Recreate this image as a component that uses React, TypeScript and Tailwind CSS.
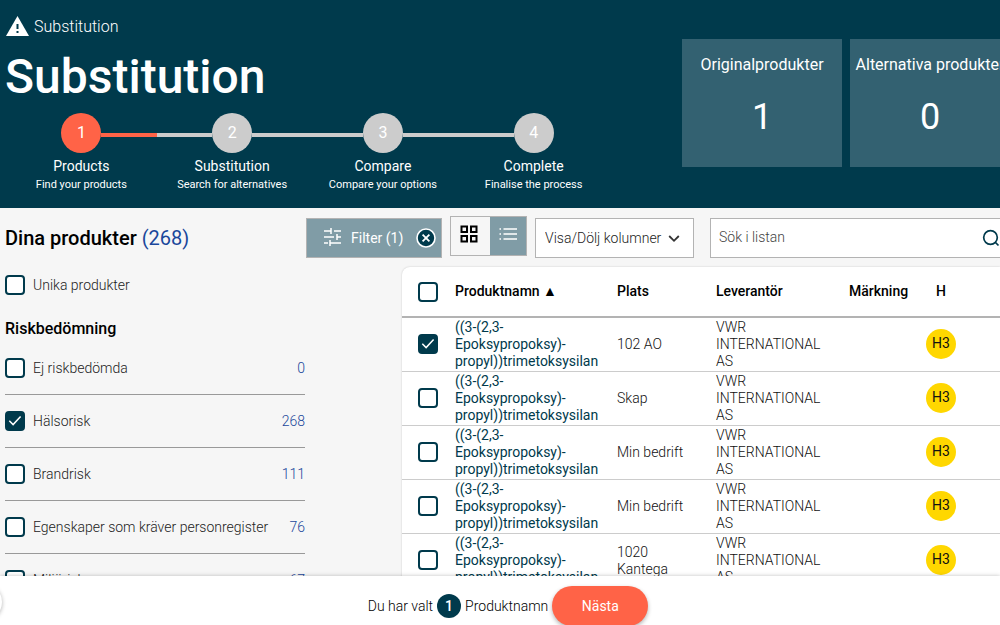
import { useState } from "react";

type CheckProps = { id: string; label?: string; checked: boolean; onChange: () => void };

function CheckBox({ id, label, checked, onChange }: CheckProps) {
  return (
    <span className="grid size-5 shrink-0">
      <input
        id={id}
        type="checkbox"
        aria-label={label}
        checked={checked}
        onChange={onChange}
        className="peer col-start-1 row-start-1 size-5 appearance-none rounded border-2 border-[#003a4c] bg-white checked:bg-[#003a4c]"
      />
      <svg
        viewBox="0 0 20 20"
        fill="none"
        stroke="white"
        strokeWidth="1.5"
        className="pointer-events-none invisible col-start-1 row-start-1 size-5 peer-checked:visible"
      >
        <path d="M4.3 9.8 L8.1 13.6 L15.6 5.6" />
      </svg>
    </span>
  );
}

const steps = [
  { title: "Products", hint: "Find your products" },
  { title: "Substitution", hint: "Search for alternatives" },
  { title: "Compare", hint: "Compare your options" },
  { title: "Complete", hint: "Finalise the process" },
];

function Step({ index, title, hint }: { index: number; title: string; hint: string }) {
  const left = index === 0 ? "" : "bg-[#cccccc]";
  const right = index === 0 ? "bg-[#ff6347]" : index === steps.length - 1 ? "" : "bg-[#cccccc]";
  return (
    <li className="flex flex-1 flex-col items-center">
      <div className="flex w-full items-center">
        <span className={`mt-1 h-1 flex-1 ${left}`} />
        <span
          className={`flex size-10 items-center justify-center rounded-full text-base ${
            index === 0 ? "bg-[#ff6347]" : "bg-[#cccccc]"
          }`}
        >
          {index + 1}
        </span>
        <span className={`mt-1 h-1 flex-1 ${right}`} />
      </div>
      <span className="mt-1 text-sm leading-[18px]">{title}</span>
      <span className="text-[11px] leading-5">{hint}</span>
    </li>
  );
}

function Stat({ label, value }: { label: string; value: number }) {
  return (
    <div className="flex h-32 w-40 flex-col items-center bg-[#336171] pt-[13px]">
      <span className="text-base leading-[26px] whitespace-nowrap">{label}</span>
      <span className="mt-4 text-4xl leading-[46px]">{value}</span>
    </div>
  );
}

const risks = [
  { name: "Ej riskbedömda", count: 0 },
  { name: "Hälsorisk", count: 268 },
  { name: "Brandrisk", count: 111 },
  { name: "Egenskaper som kräver personregister", count: 76 },
  { name: "Miljörisk", count: 67 },
];

const places = ["102 AO", "Skap", "Min bedrift", "Min bedrift", "1020 Kantega"];

function toggle<T>(list: T[], item: T) {
  return list.includes(item) ? list.filter((x) => x !== item) : [...list, item];
}

export default function App() {
  const [unique, setUnique] = useState(false);
  const [activeRisks, setActiveRisks] = useState(["Hälsorisk"]);
  const [selected, setSelected] = useState([0]);
  const [query, setQuery] = useState("");
  const all = selected.length === places.length;

  return (
    <div className="relative flex h-screen flex-col overflow-hidden bg-[#f6f6f6] font-['Roboto',sans-serif] text-black">
      <header className="flex shrink-0 bg-[#003a4c] pb-[13px] text-white">
        <div className="min-w-0 flex-1 pt-4 pl-[5px]">
          <div className="flex h-[22px] items-center gap-[5px]">
            <svg viewBox="0 0 24 20" className="mb-0.5 h-5 w-6 shrink-0">
              <path fill="white" d="M12.5 0 L24 20 H1 Z" />
              <path fill="#003a4c" d="M11.5 8 h2 v5 h-2 Z M11.5 15 h2 v2 h-2 Z" />
            </svg>
            <span className="text-base font-light">Substitution</span>
          </div>
          <h1 className="mt-[11px] text-5xl leading-14 font-medium">Substitution</h1>
          <ol className="mt-2 flex max-w-[604px] pl-px">
            {steps.map((s, i) => (
              <Step key={s.title} index={i} title={s.title} hint={s.hint} />
            ))}
          </ol>
        </div>
        <div className="-mr-2.5 flex shrink-0 gap-2 pt-[39px]">
          <Stat label="Originalprodukter" value={1} />
          <Stat label="Alternativa produkter" value={0} />
        </div>
      </header>

      <main className="flex min-h-0 flex-1 overflow-hidden pl-[5px]">
        <aside className="w-[300px] shrink-0 pt-4 text-sm font-light text-[#222222]">
          <h2 className="text-xl leading-7 font-medium text-black">
            Dina produkter <span className="font-normal text-[#1a479b]">(268)</span>
          </h2>
          <div className="mt-[23px] flex items-center gap-2">
            <CheckBox id="unique" checked={unique} onChange={() => setUnique(!unique)} />
            <label htmlFor="unique">Unika produkter</label>
          </div>
          <h3 className="mt-[22px] text-base leading-6 font-medium text-black">Riskbedömning</h3>
          <ul>
            {risks.map((r, i) => (
              <li key={r.name} className="flex h-[53px] items-center gap-2 border-b border-[#999999] first:mt-px">
                <CheckBox
                  id={`risk-${i}`}
                  checked={activeRisks.includes(r.name)}
                  onChange={() => setActiveRisks(toggle(activeRisks, r.name))}
                />
                <label htmlFor={`risk-${i}`}>{r.name}</label>
                <span className="ml-auto text-[#1a479b]">{r.count}</span>
              </li>
            ))}
          </ul>
        </aside>

        <section className="min-w-0 flex-1 pl-px">
          <div className="flex items-start pt-2">
            <button
              type="button"
              className="mt-0.5 flex h-10 w-34 items-center border border-[#b3b3b3] bg-[#809ca6] pl-4 text-sm text-white"
            >
              <svg viewBox="0 0 20 20" stroke="white" strokeWidth="1.5" fill="none" className="mr-2 mb-0.5 size-5">
                <path d="M1 4 H8 M8 1 V7 M11 4 H18 M1 10 H11 M14 7 V13 M14 10 H18 M1 16 H5 M7 13 V19 M7 16 H18" />
              </svg>
              <span>Filter (1)</span>
              <svg viewBox="0 0 20 20" className="ml-[13px] size-5">
                <circle cx="10" cy="10" r="9" fill="#003a4c" stroke="white" strokeWidth="1.6" />
                <path d="M6.6 6.6 L13.4 13.4 M13.4 6.6 L6.6 13.4" stroke="white" strokeWidth="1.8" />
              </svg>
            </button>
            <div className="ml-2 flex h-10 w-[77px] border border-[#b3b3b3]">
              <button type="button" aria-label="Grid" className="flex flex-1 items-center justify-center pr-1 pb-1">
                <svg viewBox="0 0 18 18" fill="none" stroke="black" strokeWidth="2" className="size-[18px]">
                  <path d="M1.5 1.5 h5.5 v5.5 h-5.5 Z M11 1.5 h5.5 v5.5 h-5.5 Z M1.5 11 h5.5 v5.5 h-5.5 Z M11 11 h5.5 v5.5 h-5.5 Z" />
                </svg>
              </button>
              <button type="button" aria-label="List" className="flex w-9 items-center justify-center bg-[#809ca6] pb-1">
                <svg viewBox="0 0 18 14" stroke="white" strokeWidth="1.4" className="h-3.5 w-[18px]">
                  <path d="M0.5 2 H2 M4.5 2 H18 M0.5 7 H2 M4.5 7 H18 M0.5 12 H2 M4.5 12 H18" />
                </svg>
              </button>
            </div>
            <div className="mt-0.5 ml-2 grid h-10 w-[159px] items-center border border-[#b3b3b3] bg-white">
              <select
                aria-label="Visa/Dölj kolumner"
                className="col-start-1 row-start-1 h-full w-full appearance-none pl-[9px] text-sm font-light text-[#222222]"
              >
                <option>Visa/Dölj kolumner</option>
              </select>
              <svg
                viewBox="0 0 12 8"
                fill="none"
                stroke="#333333"
                strokeWidth="1.8"
                className="pointer-events-none col-start-1 row-start-1 mt-0.5 mr-[13px] h-2 w-3 justify-self-end"
              >
                <path d="M1.2 1 L6 5.8 L10.8 1" />
              </svg>
            </div>
            <div className="mt-0.5 -mr-2 ml-4 flex h-10 min-w-0 flex-1 items-center border border-[#b3b3b3] bg-white pr-[7px]">
              <input
                type="text"
                aria-label="Sök i listan"
                placeholder="Sök i listan"
                value={query}
                onChange={(e) => setQuery(e.target.value)}
                className="h-full min-w-0 flex-1 pb-0.5 pl-2 text-sm font-light outline-none placeholder:text-[#444444]"
              />
              <svg viewBox="0 0 18 18" fill="none" stroke="#003a4c" strokeWidth="1.7" className="size-[18px]">
                <circle cx="8.5" cy="8.5" r="6.8" />
                <path d="M13 13 L16.5 16.5" />
              </svg>
            </div>
          </div>

          <div className="mt-[9px] ml-24 overflow-hidden rounded-tl-lg bg-white shadow-[0_0_2px_rgba(0,0,0,0.2)]">
            <table className="w-full table-fixed border-collapse text-left text-sm leading-[17px]">
              <colgroup>
                <col className="w-[52px]" />
                <col className="w-[162px]" />
                <col className="w-[99px]" />
                <col className="w-[133px]" />
                <col className="w-[76px]" />
                <col className="w-[34px]" />
                <col />
              </colgroup>
              <thead>
                <tr className="h-[50px] border-b-2 border-[#b3b3b3]">
                  <th className="pl-4">
                    <CheckBox
                      id="all"
                      label="Välj alla"
                      checked={all}
                      onChange={() => setSelected(all ? [] : places.map((_, i) => i))}
                    />
                  </th>
                  <th className="px-px font-medium">Produktnamn ▲</th>
                  <th className="px-px font-medium">Plats</th>
                  <th className="px-px font-medium">Leverantör</th>
                  <th className="px-px font-medium">Märkning</th>
                  <th className="px-px text-center font-medium">H</th>
                  <th />
                </tr>
              </thead>
              <tbody>
                {places.map((place, i) => (
                  <tr key={i} className="h-[54px] border-b border-[#cccccc] font-light text-[#111111]">
                    <td className="pb-0.5 pl-4">
                      <CheckBox
                        id={`row-${i}`}
                        label={`Välj rad ${i + 1}`}
                        checked={selected.includes(i)}
                        onChange={() => setSelected(toggle(selected, i))}
                      />
                    </td>
                    <td className="p-px">
                      <a href="#product" className="font-normal text-[#003a4c]">
                        ((3-(2,3-
                        <br />
                        Epoksypropoksy)-
                        <br />
                        propyl))trimetoksysilan
                      </a>
                    </td>
                    <td className="p-px pr-6">{place}</td>
                    <td className="p-px pr-6">VWR INTERNATIONAL AS</td>
                    <td />
                    <td className="px-px pb-0.5">
                      <span className="mx-auto flex size-[30px] items-center justify-center rounded-full bg-[#ffd700] font-normal">
                        H3
                      </span>
                    </td>
                    <td />
                  </tr>
                ))}
              </tbody>
            </table>
          </div>
        </section>
      </main>

      <footer className="relative z-10 flex h-[49px] shrink-0 items-start justify-center bg-white pt-2.5 pl-4 text-sm font-light shadow-[0_0_4px_rgba(0,0,0,0.25)]">
        <div className="flex h-10 items-center gap-1">
          <span>Du har valt</span>
          <span className="flex size-6 items-center justify-center rounded-full bg-[#003a4c] font-medium text-white">
            {selected.length}
          </span>
          <span>Produktnamn</span>
          <button
            type="button"
            className="h-10 w-24 rounded-full bg-[#ff6347] font-normal text-white shadow-[0_2px_4px_rgba(0,0,0,0.3)]"
          >
            Nästa
          </button>
        </div>
        <span className="absolute top-2 -left-[34px] size-9 rounded-full bg-white shadow-[0_1px_4px_rgba(0,0,0,0.3)]" />
      </footer>
    </div>
  );
}
